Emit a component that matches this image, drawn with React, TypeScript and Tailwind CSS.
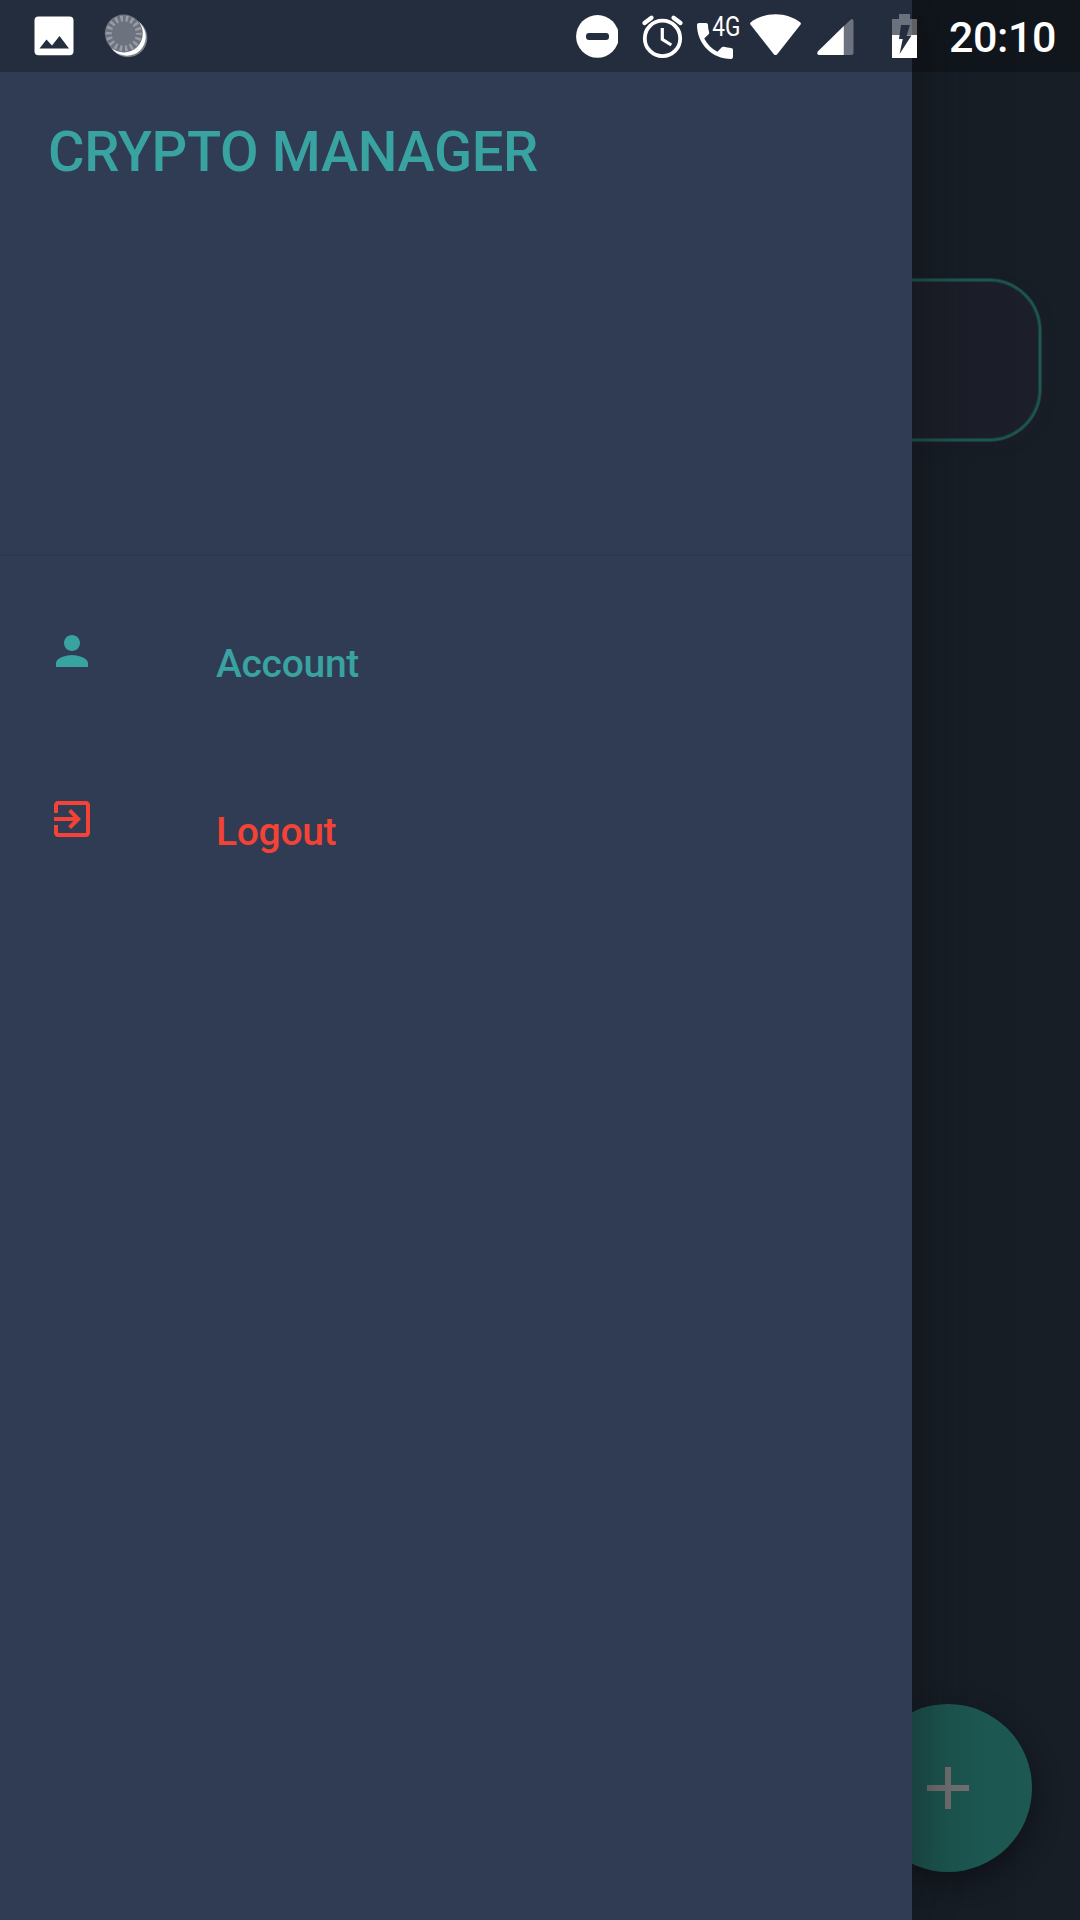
import React from "react";

function StatusIcons() {
  return (
    <div className="flex h-full items-start text-white">
      {/* Picture notification */}
      <svg className="ml-[34px] mt-4 h-10 w-10" viewBox="0 0 40 40">
        <rect x="0.5" y="0.5" width="39" height="38.7" rx="4" fill="#fff" />
        <path d="M5.5 32.5 12.5 23.5 18 29.5 25.5 20 35 32.5Z" fill="#252e3f" />
      </svg>
      {/* Progress notification */}
      <svg className="ml-7 mt-3 h-12 w-12" viewBox="0 0 48 48">
        <circle cx="25.8" cy="25.8" r="19.5" fill="#fff" opacity="0.4" />
        <circle cx="24.8" cy="24.7" r="19" fill="#fff" />
        <circle cx="21.8" cy="21.5" r="19" fill="#6c737f" />
        <circle cx="21.8" cy="21.5" r="15" fill="none" stroke="#989ca4" strokeWidth="6" strokeDasharray="2.5 2.736" strokeDashoffset="1.2" />
      </svg>
      {/* Do not disturb */}
      <svg className="ml-[424px] mt-3.5 h-11 w-11" viewBox="574 14 44 44">
        <circle cx="597.5" cy="36.4" r="21.4" fill="#fff" />
        <rect x="586" y="33" width="23" height="7" rx="3" fill="#252e3f" />
      </svg>
      {/* Alarm */}
      <svg className="ml-[22px] mt-3.5 h-[46px] w-11" viewBox="640 14 44 46" fill="none" stroke="#fff">
        <circle cx="662.5" cy="38.4" r="17.7" strokeWidth="3.8" />
        <path d="M644.5 23 651.5 17.7M680.5 23 673.5 17.7" strokeWidth="4.3" strokeLinecap="round" />
        <path d="M662.3 28V39.3L671.3 45" strokeWidth="3.2" />
      </svg>
      {/* Voice call over 4G */}
      <svg className="ml-1.5 mt-3 h-12 w-[54px]" viewBox="690 12 54 48">
        <path transform="translate(691 17) scale(2)" d="M20 15.5c-1.25 0-2.45-.2-3.57-.57-.35-.11-.74-.03-1.02.24l-2.2 2.2c-2.83-1.44-5.15-3.75-6.59-6.59l2.2-2.21c.28-.26.36-.65.25-1C8.7 6.45 8.5 5.25 8.5 4c0-.55-.45-1-1-1H4c-.55 0-1 .45-1 1 0 9.39 7.61 17 17 17 .55 0 1-.45 1-1v-3.5c0-.55-.45-1-1-1z" fill="#fff" />
        <text transform="translate(712.3 36) scale(0.84 1)" fill="#fff" fontFamily="Roboto" fontSize="27">4G</text>
      </svg>
      {/* Wi-Fi */}
      <svg className="ml-1.5 mt-3 h-11 w-[52px]" viewBox="750 12 52 44">
        <path d="M775.5 14.2C766 14.2 757 17.4 750.6 22.4Q749.7 23.2 750.4 24.5L773.8 54.2Q775.5 55.9 777.2 54.2L800.6 24.5Q801.3 23.2 800.4 22.4C794 17.4 785 14.2 775.5 14.2Z" fill="#fff" />
      </svg>
      {/* Mobile signal */}
      <svg className="ml-3.5 mt-4 h-10 w-[38px]" viewBox="816 16 38 40">
        <path d="M843.5 26.5 850.5 19.7Q853.5 17.5 853.5 21.5V52.5Q853.5 55 851 55H843.5Z" fill="#6c737f" />
        <path d="M843.8 26V55H819Q816 54.5 818 51.3Z" fill="#fff" />
      </svg>
      {/* Charging battery */}
      <svg className="ml-[38px] mt-3.5 h-11 w-[25px]" viewBox="892 14 25 44">
        <path d="M899 14H910V19H917V35H892V19H899Z" fill="#fff" fillOpacity="0.33" />
        <path d="M892 35H917V58H892Z" fill="#fff" />
        <path d="M901 25H910L906.7 35.5H911.5L899.6 54 902.7 39H899Z" fill="#252e3f" />
      </svg>
      <span className="ml-8 mt-[12px] text-[43px] leading-[50px] font-medium tracking-[-0.4px] whitespace-nowrap">20:10</span>
    </div>
  );
}

function MenuItem({ icon, label, color }: { icon: React.ReactNode; label: string; color: string }) {
  return (
    <li className={`flex h-[168px] items-start ${color}`}>
      <span className="mt-[47px] ml-12 h-12 w-12">{icon}</span>
      <span className="mt-[61px] ml-[120px] text-[39px] leading-[46px] font-medium tracking-[-0.3px]">{label}</span>
    </li>
  );
}

export default function App() {
  return (
    <div className="relative h-[1920px] w-[1080px] overflow-hidden bg-[#171e26] font-['Roboto',sans-serif]">
      <main className="flex h-full flex-col items-end justify-between pt-[279px] pb-12">
        <div className="mr-[39px] h-[162px] w-[1002px] rounded-[52px] border-2 border-[#1d5852] bg-[#1c1e29] shadow-[0_0_0_1px_#1b3f40,inset_0_0_0_1px_#1c3f42,4px_5px_10px_rgba(29,29,39,0.9)]" />
        <button className="mr-12 flex h-[168px] w-[168px] items-center justify-center rounded-full bg-[#1d5852] shadow-[3px_10px_24px_rgba(13,15,22,0.7)]">
          <svg className="h-[42px] w-[42px]" viewBox="0 0 42 42">
            <path d="M18 0H24V18H42V24H24V42H18V24H0V18H18Z" fill="#737373" />
          </svg>
        </button>
      </main>

      <aside className="absolute inset-y-0 left-0 w-[912px] bg-[#303c53] shadow-[0_0_70px_rgba(15,15,20,0.6)]">
        <header className="h-[556px] border-b-2 border-[#2d394a] pt-[119px] pl-12">
          <h1 className="text-[56px] leading-[66px] font-medium tracking-[-0.36px] text-[#38a3a0]">CRYPTO MANAGER</h1>
        </header>
        <ul className="pt-6">
          <MenuItem
            label="Account"
            color="text-[#38a3a0]"
            icon={
              <svg viewBox="0 0 24 24" fill="currentColor">
                <path d="M12 12c2.21 0 4-1.79 4-4s-1.79-4-4-4-4 1.79-4 4 1.79 4 4 4zm0 2c-2.67 0-8 1.34-8 4v2h16v-2c0-2.66-5.33-4-8-4z" />
              </svg>
            }
          />
          <MenuItem
            label="Logout"
            color="text-[#f44336]"
            icon={
              <svg viewBox="0 0 24 24" fill="currentColor">
                <path d="M10.09 15.59 11.5 17l5-5-5-5-1.41 1.41L12.67 11H3v2h9.67l-2.58 2.59zM19 3H5c-1.11 0-2 .9-2 2v4h2V5h14v14H5v-4H3v4c0 1.1.89 2 2 2h14c1.1 0 2-.9 2-2V5c0-1.1-.9-2-2-2z" />
              </svg>
            }
          />
        </ul>
      </aside>

      <div className="absolute inset-x-0 top-0 h-[72px] bg-black/25">
        <StatusIcons />
      </div>
    </div>
  );
}
